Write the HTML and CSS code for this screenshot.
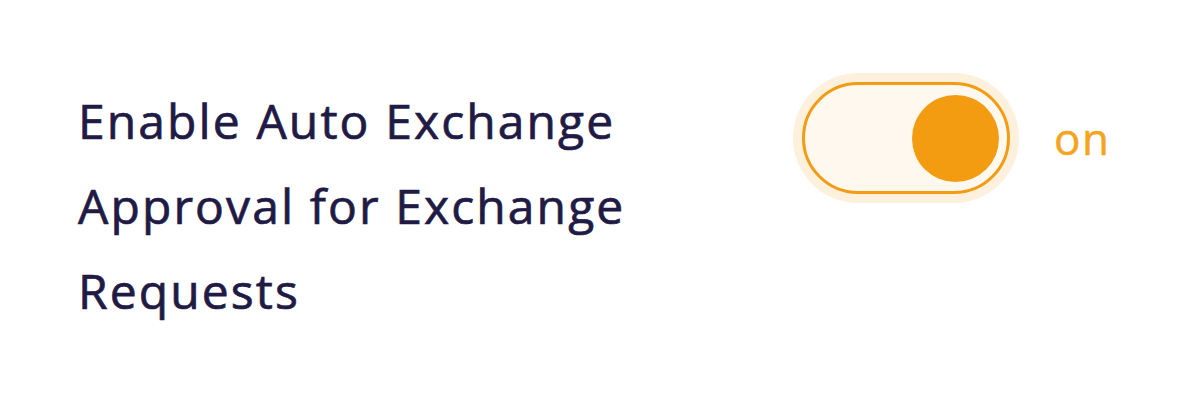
FILE: index.html
```html
<!DOCTYPE html>
<html lang="en">
<head>
    <meta charset="UTF-8">
    <meta name="viewport" content="width=device-width, initial-scale=1.0">
    <title>Exchange Settings</title>
    <link rel="stylesheet" href="styles.css">
</head>
<body>

    <div class="setting">
        <div class="setting-label">Enable Auto Exchange Approval for Exchange Requests</div>
        <div class="setting-control">
            <div class="switch on">
                <div class="switch-knob"></div>
            </div>
            <span class="switch-state">on</span>
        </div>
    </div>

</body>
</html>
```

FILE: styles.css
```css
:root {
    --orange: #f39c12;
    --orange-soft: #fdf0dc;
    --cream: #fef8ee;
    --text-dark: #1f1b45;
}
body {
    font-family: 'Open Sans', sans-serif;
    margin: 0;
    padding: 0;
    background-color: #ffffff;
}
.setting {
    display: flex;
    align-items: flex-start;
    padding: 78px 0 0 78px;
    gap: 144px;
}
.setting-label {
    flex: 0 0 580px;
    font-size: 48px;
    letter-spacing: 2.1px;
    line-height: 85px;
    color: var(--text-dark);
    -webkit-text-stroke: 0.7px var(--text-dark);
}
.setting-control {
    display: flex;
    align-items: center;
    gap: 44px;
    margin-top: 4px;
}
.switch {
    box-sizing: border-box;
    width: 208px;
    height: 112px;
    border: 3px solid var(--orange);
    border-radius: 56px;
    background: var(--cream);
    box-shadow: 0 0 0 9px var(--orange-soft);
    display: flex;
    align-items: center;
    justify-content: flex-end;
    padding-right: 8px;
}
.switch-knob {
    width: 87px;
    height: 87px;
    border-radius: 50%;
    background: var(--orange);
}
.switch-state {
    font-size: 44px;
    letter-spacing: 1.5px;
    color: #f5a41e;
    -webkit-text-stroke: 0.5px #f5a41e;
}
```
